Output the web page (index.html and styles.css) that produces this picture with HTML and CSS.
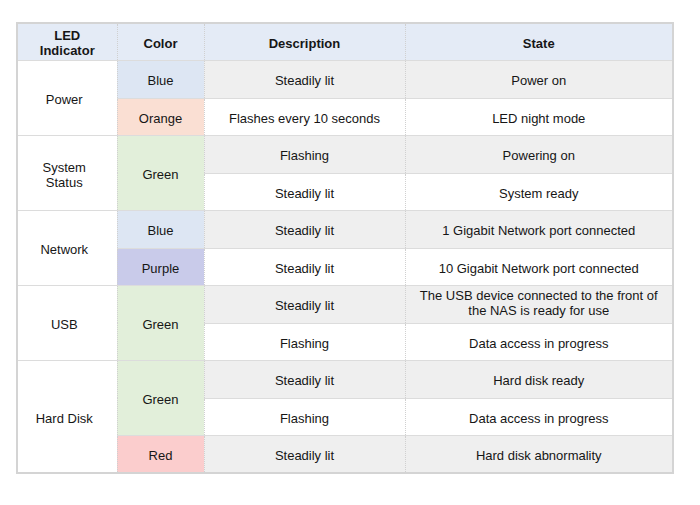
FILE: index.html
```html
<!DOCTYPE html>
<html>
<head>
<meta charset="utf-8">
<link rel="stylesheet" href="styles.css">
</head>
<body>
<div class="page">
<table class="led">
  <colgroup>
    <col class="c1"><col class="c2"><col class="c3"><col class="c4">
  </colgroup>
  <thead>
    <tr><th>LED<br>Indicator</th><th>Color</th><th>Description</th><th>State</th></tr>
  </thead>
  <tbody>
    <tr class="odd"><td rowspan="2" class="ind">Power</td><td class="blue">Blue</td><td>Steadily lit</td><td>Power on</td></tr>
    <tr><td class="orange">Orange</td><td>Flashes every 10 seconds</td><td>LED night mode</td></tr>
    <tr class="odd"><td rowspan="2" class="ind">System<br>Status</td><td rowspan="2" class="green">Green</td><td>Flashing</td><td>Powering on</td></tr>
    <tr><td>Steadily lit</td><td>System ready</td></tr>
    <tr class="odd"><td rowspan="2" class="ind">Network</td><td class="blue">Blue</td><td>Steadily lit</td><td>1 Gigabit Network port connected</td></tr>
    <tr><td class="purple">Purple</td><td>Steadily lit</td><td>10 Gigabit Network port connected</td></tr>
    <tr class="odd"><td rowspan="2" class="ind">USB</td><td rowspan="2" class="green">Green</td><td>Steadily lit</td><td class="two">The USB device connected to the front of<br>the NAS is ready for use</td></tr>
    <tr><td>Flashing</td><td>Data access in progress</td></tr>
    <tr class="odd"><td rowspan="3" class="ind">Hard Disk</td><td rowspan="2" class="green">Green</td><td>Steadily lit</td><td>Hard disk ready</td></tr>
    <tr><td>Flashing</td><td>Data access in progress</td></tr>
    <tr class="odd"><td class="red">Red</td><td>Steadily lit</td><td>Hard disk abnormality</td></tr>
  </tbody>
</table>
</div>
</body>
</html>
```
FILE: styles.css
```css
html, body {
  margin: 0;
  padding: 0;
  background: #ffffff;
}
.page {
  padding: 22px 0 0 16px;
}
.led {
  border-collapse: collapse;
  table-layout: fixed;
  width: 656px;
  font-family: "Liberation Sans", Arial, sans-serif;
  font-size: 13px;
  line-height: 15px;
  color: #161616;
  border: 2px solid #d4d4d4;
}
.c1 { width: 100px; }
.c2 { width: 87px; }
.c3 { width: 201px; }
.c4 { width: 268px; }
.led th, .led td {
  text-align: center;
  vertical-align: middle;
  padding: 3px 2px 0;
  border-left: 1px dotted #d0d0d0;
  border-right: 1px dotted #d0d0d0;
  border-top: 1px solid #dcdcdc;
  border-bottom: 1px solid #dcdcdc;
}
.led th {
  background: #e4ebf6;
  font-weight: bold;
  height: 34px;
  padding-top: 2px;
}
.led tbody tr {
  height: 37.5px;
}
.led tbody tr.odd td {
  background: #efefef;
}
.led td.ind, .led tbody tr.odd td.ind {
  background: #ffffff;
  padding-right: 8px;
}
.led td.blue, .led tbody tr.odd td.blue { background: #dde6f3; }
.led td.orange { background: #fadfd3; }
.led td.green, .led tbody tr.odd td.green { background: #e2efda; }
.led td.purple { background: #c9cbea; }
.led td.red, .led tbody tr.odd td.red { background: #fbcdcd; }
.led td.two {
  vertical-align: top;
  padding-top: 2px;
}
```
